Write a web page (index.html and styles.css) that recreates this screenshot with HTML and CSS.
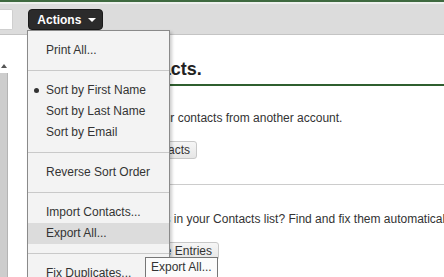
FILE: index.html
```html
<!DOCTYPE html>
<html>

<head>
    <title>Contacts</title>
    <link rel="stylesheet" href="styles.css">
</head>

<body>

    <div class="toolbar">
        <div class="search"></div>
        <button class="actions">Actions <span class="caret"></span></button>
    </div>

    <div class="layout">
        <div class="sidebar">
            <div class="scroll">
                <span class="arrow"></span>
            </div>
        </div>

        <div class="content">
            <div class="section">
                <h2>Your Contacts.</h2>
                <p>Easily import your contacts from another account.</p>
                <button class="btn">Import My Contacts</button>
            </div>
            <div class="section">
                <p>Duplicate entries in your Contacts list? Find and fix them automatically.</p>
                <button class="btn">Fix All Duplicate Entries</button>
            </div>
        </div>
    </div>

    <ul class="menu">
        <li>Print All...</li>
        <li class="sep"></li>
        <li class="checked">Sort by First Name</li>
        <li>Sort by Last Name</li>
        <li>Sort by Email</li>
        <li class="sep"></li>
        <li>Reverse Sort Order</li>
        <li class="sep"></li>
        <li>Import Contacts...</li>
        <li class="hover">Export All...</li>
        <li class="sep"></li>
        <li>Fix Duplicates...</li>
    </ul>

    <div class="tooltip">Export All...</div>

</body>

</html>
```

FILE: styles.css
```css
html,
body {
    overflow: hidden;
}

body {
    margin: 0;
    height: 277px;
    font-family: "Liberation Sans", Arial, sans-serif;
    font-size: 12px;
    color: #333;
    background-color: #fff;
}

.toolbar {
    display: flex;
    align-items: flex-start;
    height: 35px;
    padding-top: 6px;
    box-sizing: border-box;
    background-color: #dcdcdc;
    border-top: 2px solid #3f6a40;
    border-bottom: 1px solid #c4c4c4;
    box-shadow: inset 0 2px 0 #eef1ee;
}

.search {
    width: 12px;
    height: 19px;
    margin-top: 1px;
    background-color: #fff;
    border: 1px solid #cfcfcf;
    border-left: none;
    border-radius: 0 2px 2px 0;
}

.actions {
    width: 75px;
    height: 21px;
    margin-left: 15px;
    margin-top: 1px;
    padding: 0 0 0 2px;
    background-color: #2b2b2b;
    color: #fff;
    border: 1px solid #1a1a1a;
    border-radius: 4px;
    font-family: "Liberation Sans", Arial, sans-serif;
    font-size: 12px;
    font-weight: bold;
    text-align: center;
}

.caret {
    display: inline-block;
    width: 0;
    height: 0;
    margin-left: 3px;
    vertical-align: 2px;
    border-left: 4px solid transparent;
    border-right: 4px solid transparent;
    border-top: 4px solid #fff;
}

.layout {
    display: flex;
    height: 242px;
}

.sidebar {
    display: flex;
    width: 27px;
}

.scroll {
    position: relative;
    width: 7px;
    margin-top: 38px;
    background-color: #cdcdcd;
    border-right: 1px solid #b4b4b4;
}

.arrow {
    position: absolute;
    left: 1px;
    top: -9px;
    border-left: 3px solid transparent;
    border-right: 3px solid transparent;
    border-bottom: 4px solid #555;
}

.content {
    flex: 1;
    min-width: 0;
    padding-left: 52px;
}

.section {
    padding-bottom: 25px;
    border-bottom: 1px solid #cccccc;
}

.section + .section {
    border-bottom: none;
}

h2 {
    margin: 0;
    padding-top: 24px;
    padding-bottom: 4px;
    text-indent: -4px;
    font-size: 18px;
    line-height: 21px;
    color: #222;
    border-bottom: 2px solid #2f5f2f;
}

p {
    margin: 0;
    padding-top: 25px;
    line-height: 14px;
    font-size: 12px;
    white-space: nowrap;
}

.section + .section p {
    padding-top: 27px;
    text-indent: 2px;
}

.btn {
    height: 18px;
    margin-top: 16px;
    padding: 0 6px;
    background: linear-gradient(#f6f6f6, #e6e6e6);
    border: 1px solid #c8c8c8;
    border-radius: 3px;
    font-family: "Liberation Sans", Arial, sans-serif;
    font-size: 12px;
    color: #333;
}

.menu {
    position: absolute;
    left: 27px;
    top: 30px;
    width: 141px;
    height: 238px;
    margin: 0;
    padding: 9px 0 0;
    overflow: hidden;
    list-style: none;
    background-color: #f3f3f3;
    border: 1px solid #8a8a8a;
    border-bottom: none;
    box-shadow: 2px 2px 3px rgba(0, 0, 0, 0.2);
}

.menu li {
    position: relative;
    height: 21px;
    padding-left: 18px;
    line-height: 21px;
    color: #333;
}

.menu li.sep {
    height: 1px;
    margin: 9px 0;
    padding: 0;
    background-color: #c9c9c9;
}

.menu li.hover {
    background-color: #dcdcdc;
}

.menu li.checked::before {
    content: "";
    position: absolute;
    left: 6px;
    top: 8px;
    width: 5px;
    height: 5px;
    border-radius: 50%;
    background-color: #333;
}

.tooltip {
    position: absolute;
    left: 145px;
    top: 257px;
    height: 19px;
    padding: 0 5px;
    line-height: 19px;
    background-color: #fbfbfb;
    border: 1px solid #767676;
    color: #333;
}
```
